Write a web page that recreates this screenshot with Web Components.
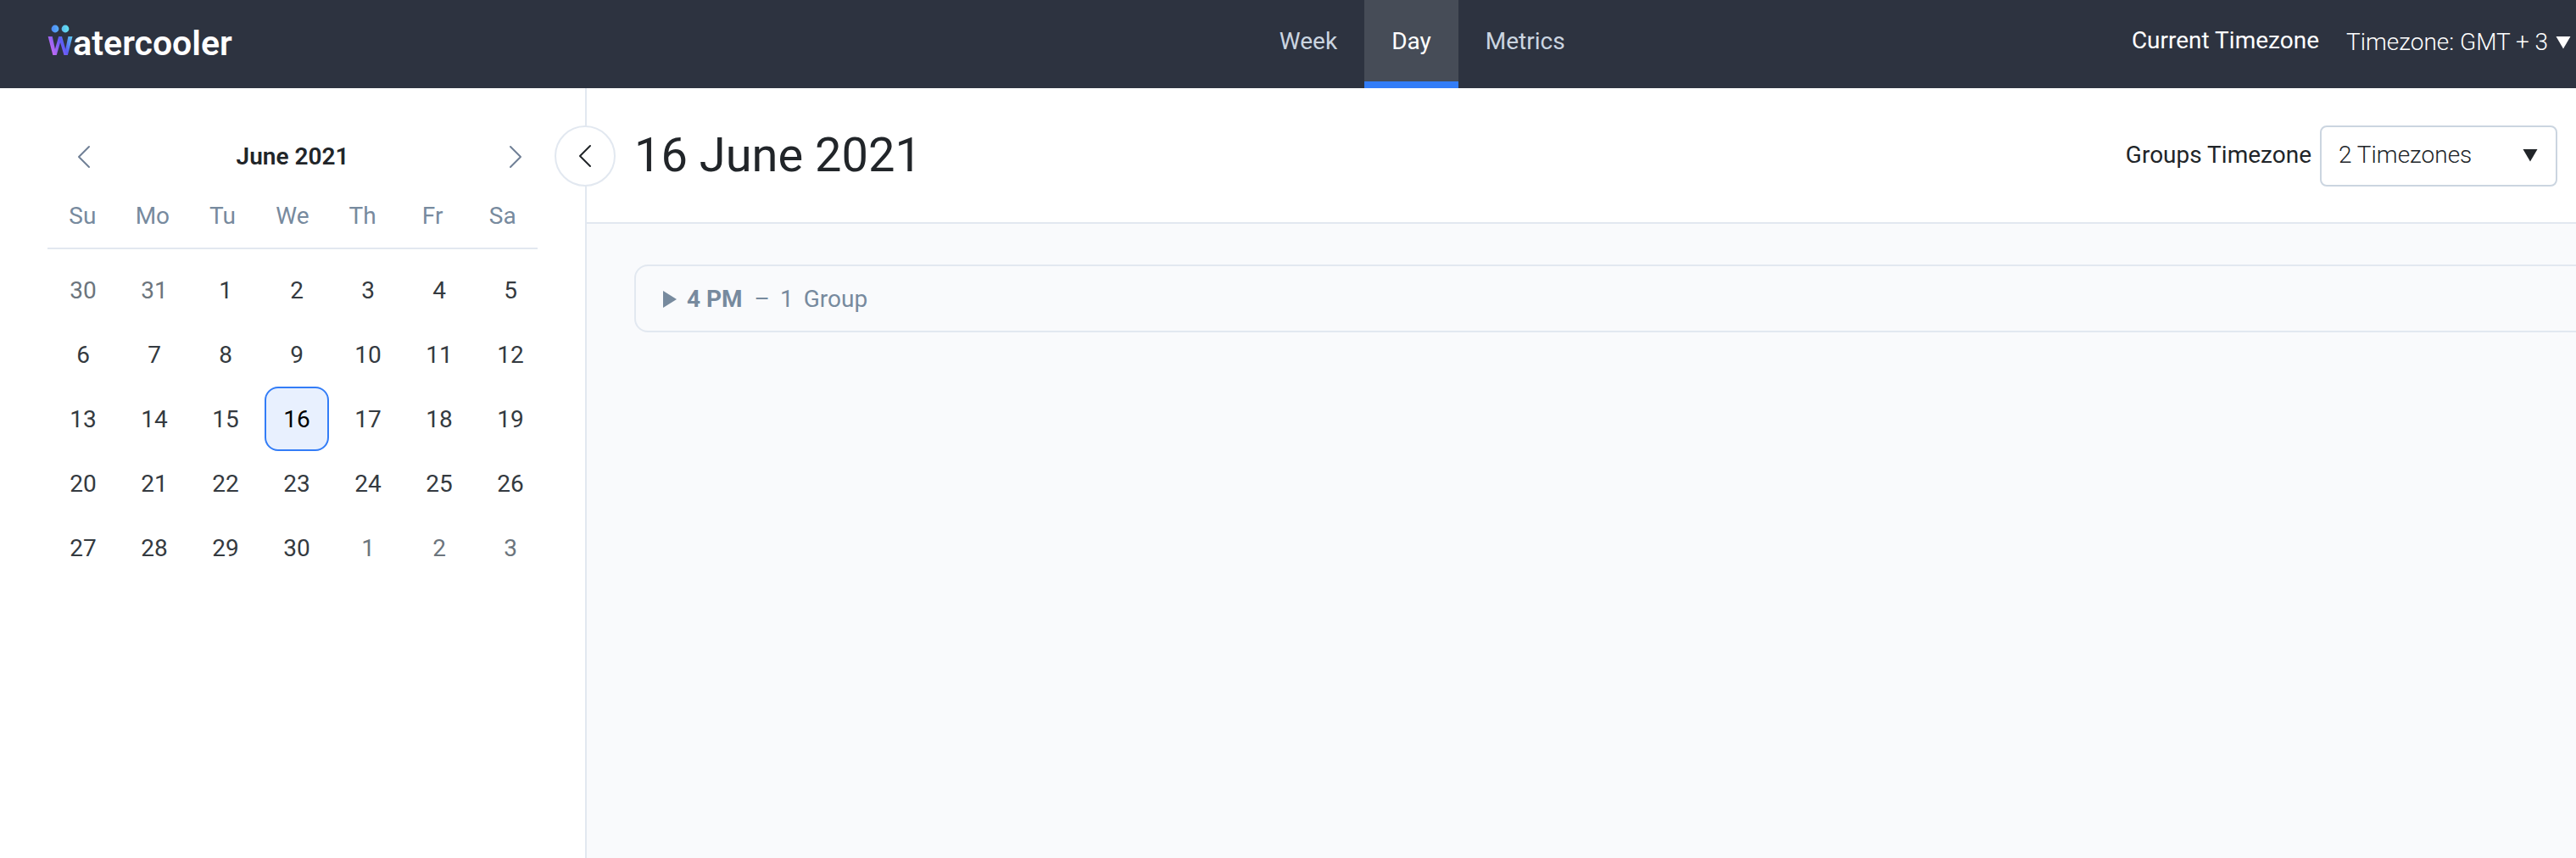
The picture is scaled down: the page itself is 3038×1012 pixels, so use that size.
<!DOCTYPE html>
<html lang="en">
<head>
<meta charset="utf-8">
<title>Watercooler</title>
<style>
  body { margin: 0; min-height: 100vh; background: #fff; font-family: Roboto, "Liberation Sans", sans-serif; font-size: 28px; color: #212529; overflow-x: hidden; }
</style>
</head>
<body>
<wc-app></wc-app>
<script>
const define = (name, html, setup) => customElements.define(name, class extends HTMLElement {
  connectedCallback() {
    if (this.shadowRoot) return;
    const root = this.attachShadow({ mode: 'open' });
    const t = document.createElement('template');
    t.innerHTML = '<style>*{box-sizing:border-box}button,select{font:inherit;color:inherit;margin:0;padding:0;border:0;background:none;cursor:pointer}</style>' + html;
    root.append(t.content.cloneNode(true));
    if (setup) setup(this, root);
  }
});

define('wc-logo', `
<style>
  :host { display: block; }
  a { position: relative; display: inline-flex; font-size: 41px; line-height: 48px; font-weight: 600; color: #fff; text-decoration: none; }
  .w { background: linear-gradient(62deg, #c86bf2 20%, #5b5bf5 55%, #5ae0f0 88%); -webkit-background-clip: text; background-clip: text; color: transparent; }
  svg { position: absolute; left: 4px; top: 2px; }
</style>
<a href="#" aria-label="watercooler"><span class="w">w</span><span>atercooler</span>
<svg width="22" height="10" viewBox="0 0 22 10" aria-hidden="true">
  <defs><linearGradient id="d" x1="0" x2="22" y1="0" y2="0" gradientUnits="userSpaceOnUse"><stop stop-color="#4d86f8"/><stop offset="1" stop-color="#65e6ee"/></linearGradient></defs>
  <circle cx="5" cy="5" r="4.4" fill="url(#d)"/><circle cx="17" cy="5" r="4.4" fill="url(#d)"/>
</svg></a>`);

define('wc-nav-item', `
<style>
  :host { display: block; }
  a { display: block; height: 104px; padding: 33px 32px 0; line-height: 32px; color: #cbd5e0; text-decoration: none; border-bottom: 8px solid transparent; }
  :host([active]) a { color: #fff; background: #464c57; border-bottom-color: #337df7; }
</style>
<a href="#"><slot></slot></a>`, (host, root) => {
  if (host.hasAttribute('active')) root.querySelector('a').setAttribute('aria-current', 'page');
});

define('wc-select', `
<style>
  :host { display: flex; align-items: center; }
  label { white-space: nowrap; line-height: 32px; }
  .box { display: grid; align-items: center; }
  select, svg { grid-area: 1 / 1; }
  select { appearance: none; font-weight: 300; line-height: 32px; }
  svg { justify-self: end; pointer-events: none; fill: currentColor; }
  :host([variant=plain]) { gap: 32px; color: #fff; }
  :host([variant=plain]) label { padding-bottom: 4px; }
  :host([variant=plain]) select { padding-right: 32px; }
  :host([variant=plain]) svg { margin-right: 6px; }
  :host([variant=boxed]) { gap: 10px; }
  :host([variant=boxed]) label { padding-bottom: 2px; }
  :host([variant=boxed]) select { width: 280px; height: 72px; padding: 0 60px 2px 20px; border: 2px solid #cbd5e0; border-radius: 8px; background: #fff; }
  :host([variant=boxed]) svg { margin: 0 23px 2px 0; }
</style>
<label for="s"></label>
<span class="box"><select id="s"><option></option></select>
<svg width="18" height="16" viewBox="0 0 18 16" aria-hidden="true"><path d="M0.5 1h17L9 15.5z"/></svg></span>`, (host, root) => {
  root.querySelector('label').textContent = host.getAttribute('label');
  root.querySelector('option').textContent = host.getAttribute('value');
});

define('wc-topbar', `
<style>
  :host { display: grid; grid-template-columns: 14fr auto 11fr; height: 104px; background: #2d3340; }
  wc-logo { padding: 27px 0 0 56px; }
  nav { display: flex; }
  wc-select { justify-self: end; height: 100px; }
</style>
<wc-logo></wc-logo>
<nav aria-label="Main"><wc-nav-item>Week</wc-nav-item><wc-nav-item active>Day</wc-nav-item><wc-nav-item>Metrics</wc-nav-item></nav>
<wc-select variant="plain" label="Current Timezone" value="Timezone: GMT + 3"></wc-select>`);

define('wc-calendar', `
<style>
  :host { display: block; }
  header { display: grid; grid-template-columns: 1fr auto 1fr; align-items: center; height: 74px; }
  header button { display: grid; place-items: center; width: 86px; height: 60px; }
  header button:last-child { width: 52px; justify-self: end; }
  h2 { margin: 0; font-size: 28px; line-height: 32px; font-weight: 600; }
  svg { fill: none; stroke: #718096; stroke-width: 2; stroke-linecap: round; stroke-linejoin: round; }
  .week { display: grid; grid-template-columns: repeat(7, 1fr); height: 72px; padding-top: 17px; line-height: 32px; text-align: center; color: #778a9e; border-bottom: 2px solid #e2e8f0; }
  .days { display: grid; grid-template-columns: repeat(7, 76px); column-gap: 8px; padding: 10px 4px 0; }
  .days button { height: 76px; border-radius: 16px; color: #343a40; }
  .days .out { color: #6c757d; }
  .days .sel { color: #000; background: #e8f0fe; border: 2px solid #337df7; }
</style>
<header>
  <button type="button" aria-label="Previous month"><svg width="16" height="28" viewBox="0 0 16 28"><path d="M14 2L2 14l12 12"/></svg></button>
  <h2>June 2021</h2>
  <button type="button" aria-label="Next month"><svg width="16" height="28" viewBox="0 0 16 28"><path d="M2 2l12 12L2 26"/></svg></button>
</header>
<div class="week"></div>
<div class="days"></div>`, (host, root) => {
  const week = root.querySelector('.week'), days = root.querySelector('.days');
  for (const d of ['Su', 'Mo', 'Tu', 'We', 'Th', 'Fr', 'Sa']) {
    const s = document.createElement('span');
    s.textContent = d;
    week.append(s);
  }
  const first = new Date(2021, 4, 30);
  for (let i = 0; i < 35; i++) {
    const date = new Date(first.getFullYear(), first.getMonth(), first.getDate() + i);
    const b = document.createElement('button');
    b.type = 'button';
    b.textContent = date.getDate();
    if (date.getMonth() !== 5) b.className = 'out';
    else if (date.getDate() === 16) { b.className = 'sel'; b.setAttribute('aria-pressed', 'true'); }
    days.append(b);
  }
});

define('wc-group-card', `
<style>
  :host { display: block; }
  details { border: 2px solid #e2e8f0; border-radius: 16px; color: #778a9e; }
  summary { display: flex; align-items: center; height: 76px; padding: 2px 0 0 30px; line-height: 32px; list-style: none; cursor: pointer; }
  svg { margin-right: 12px; fill: currentColor; }
  b { font-weight: 700; margin-right: 14px; }
  span { margin-right: 12px; }
</style>
<details><summary><svg width="18" height="20" viewBox="0 0 18 20" aria-hidden="true"><path d="M2 0l16 10L2 20z"/></svg><b></b><span>–</span><span class="n"></span><slot></slot></summary></details>`, (host, root) => {
  root.querySelector('b').textContent = host.getAttribute('time');
  root.querySelector('.n').textContent = host.getAttribute('count');
});

define('wc-day-view', `
<style>
  :host { display: flex; flex-direction: column; background: #f9fafc; overflow: hidden; }
  header { display: flex; align-items: center; justify-content: space-between; height: 160px; padding: 2px 22px 0 56px; background: #fff; border-bottom: 2px solid #e2e8f0; }
  h1 { margin: 0; padding-bottom: 2px; font-size: 56px; line-height: 64px; font-weight: 400; }
  section { padding: 48px 0 0 56px; margin-right: -20px; }
</style>
<header><h1>16 June 2021</h1><wc-select variant="boxed" label="Groups Timezone" value="2 Timezones"></wc-select></header>
<section><slot></slot></section>`);

define('wc-app', `
<style>
  :host { display: flex; flex-direction: column; min-height: 100vh; }
  main { flex: 1; display: grid; grid-template-columns: 692px 1fr; }
  aside { position: relative; padding: 44px 56px 0; border-right: 2px solid #e2e8f0; }
  .toggle { position: absolute; z-index: 1; top: 44px; right: -36px; display: grid; place-items: center; width: 72px; height: 72px; border: 2px solid #e2e8f0; border-radius: 50%; background: #fff; }
  .toggle svg { fill: none; stroke: #212529; stroke-width: 2; stroke-linecap: round; stroke-linejoin: round; }
</style>
<wc-topbar></wc-topbar>
<main>
  <aside>
    <wc-calendar></wc-calendar>
    <button class="toggle" type="button" aria-label="Collapse sidebar"><svg width="16" height="28" viewBox="0 0 16 28"><path d="M14 2L2 14l12 12"/></svg></button>
  </aside>
  <wc-day-view><wc-group-card time="4 PM" count="1">Group</wc-group-card></wc-day-view>
</main>`);
</script>
</body>
</html>
